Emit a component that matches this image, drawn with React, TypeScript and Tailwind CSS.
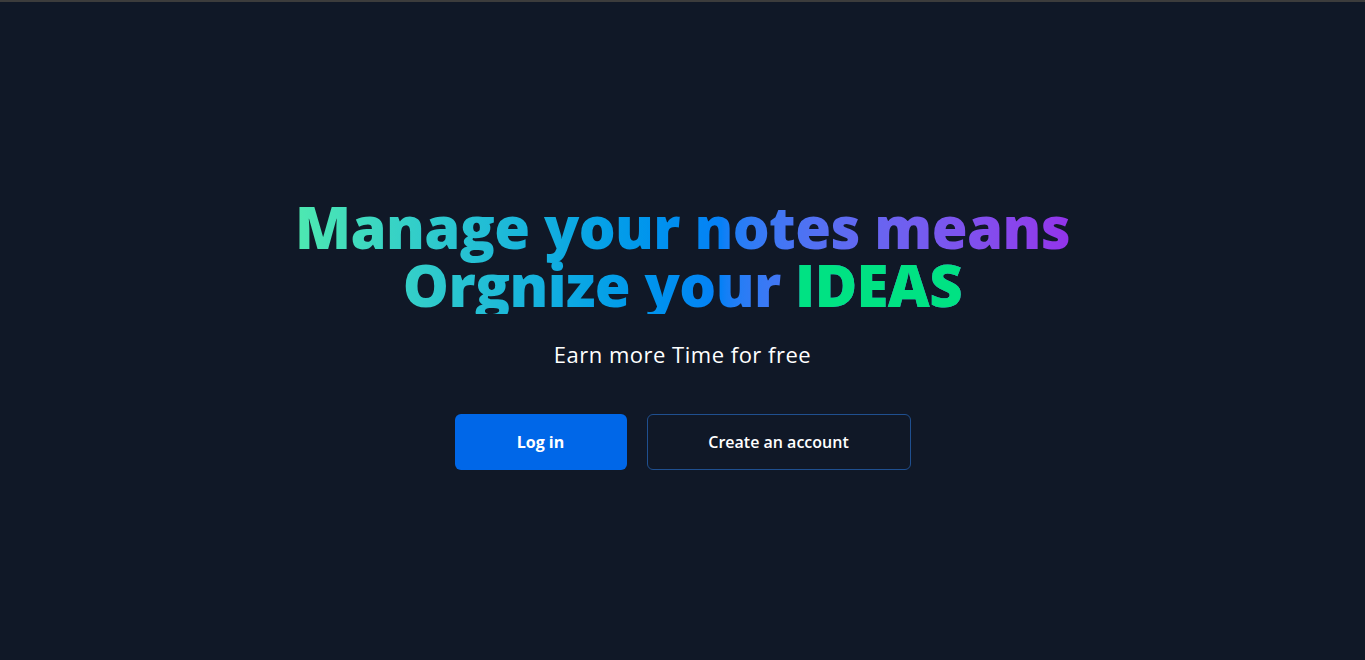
import React from 'react';

const App = () => {
  return (
    <div className="min-h-screen bg-[#101827] border-t-2 border-[#3c3c3c] pt-[5px] flex flex-col items-center justify-center font-['Open_Sans',sans-serif] text-white">
      <div className="flex flex-col items-center text-center">
        <h1 className="text-[58px] leading-none font-extrabold tracking-[-0.6px] text-center">
          <span className="inline-block bg-gradient-to-r from-[#4ee9b0] via-[#0680f6] via-55% to-[#9333ea] bg-clip-text text-transparent">
            Manage your notes means
            <br />
            Orgnize your <span className="text-[#00e283]">IDEAS</span>
          </span>
        </h1>
        <p className="mt-6 text-[22px] tracking-[0.5px] text-white">Earn more Time for free</p>
        <div className="mt-[43px] flex gap-5">
          <button className="w-[172px] h-14 rounded-md bg-[#0067e8] text-white font-bold text-base">
            Log in
          </button>
          <button className="w-[264px] h-14 rounded-md border border-[#1f4f8f] text-white font-semibold text-base">
            Create an account
          </button>
        </div>
      </div>
    </div>
  );
};

export default App;
